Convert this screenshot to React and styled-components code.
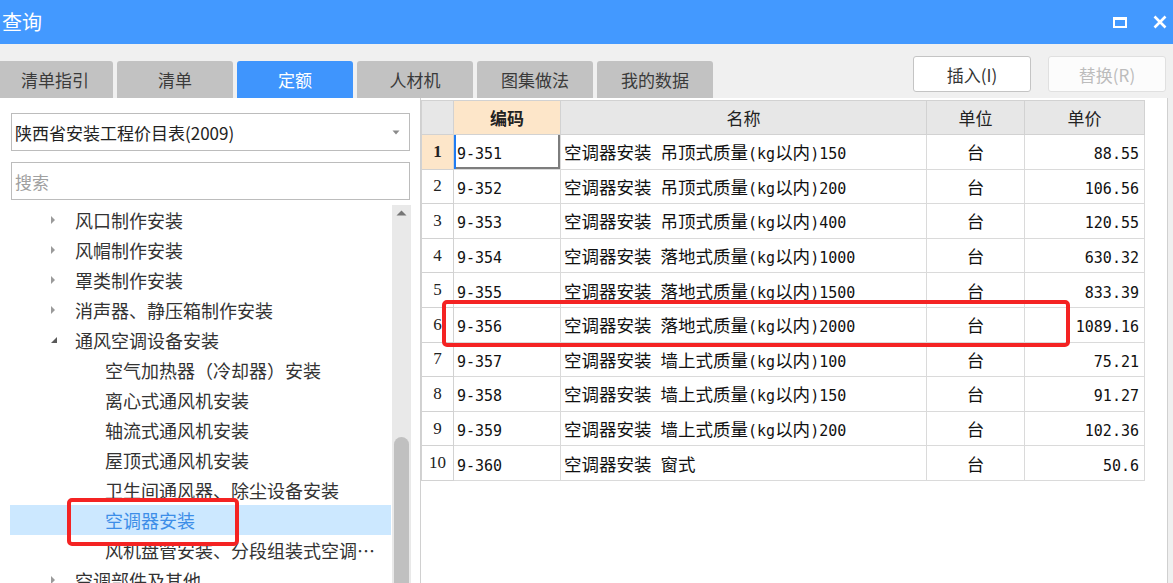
import React from 'react'
import styled, { createGlobalStyle, css } from 'styled-components'

const GlobalStyle = createGlobalStyle`
  html, body {
    margin: 0;
    padding: 0;
  }
  body {
    font-family: "Noto Sans CJK SC", "Noto Sans", sans-serif;
    background: #f0f0f0;
    color: #333;
  }
`

const Window = styled.div`
  position: relative;
  width: 1173px;
  height: 583px;
  overflow: hidden;
  display: flex;
  flex-direction: column;
  background: #f0f0f0;
`

const TitleBar = styled.div`
  flex: none;
  height: 44px;
  display: flex;
  align-items: center;
  padding: 0 6px 0 2px;
  background: #4399ff;
  color: #fff;
`

const Title = styled.div`
  flex: 1;
  font-size: 20px;
  line-height: 1;
`

const WinButtons = styled.div`
  display: flex;
  align-items: center;
  gap: 26px;
`

const Toolbar = styled.div`
  flex: none;
  height: 54px;
  display: flex;
  align-items: flex-start;
`

const Tabs = styled.div`
  display: flex;
  gap: 4px;
  margin: 17px 0 0 -3px;
`

const Tab = styled.div`
  width: 116px;
  height: 37px;
  display: flex;
  align-items: center;
  justify-content: center;
  border-radius: 3px 3px 0 0;
  background: #c2c2c2;
  color: #3a3a3a;
  font-size: 17px;
  ${p =>
    p.active &&
    css`
      background: #3f95fd;
      color: #fff;
    `};
`

const Buttons = styled.div`
  margin: 12px 7px 0 auto;
  display: flex;
  gap: 17px;
`

const Button = styled.div`
  width: 118px;
  height: 36px;
  box-sizing: border-box;
  display: flex;
  align-items: center;
  justify-content: center;
  border: 1px solid #c4c4c4;
  border-radius: 3px;
  background: #fff;
  color: #333;
  font-size: 17px;
  ${p =>
    p.disabled &&
    css`
      border-color: #e0e0e0;
      background: #fcfcfc;
      color: #bcbcbc;
    `};
`

const Body = styled.div`
  flex: 1;
  min-height: 0;
  display: flex;
  padding-right: 5px;
`

const LeftPanel = styled.div`
  width: 420px;
  flex: none;
  box-sizing: border-box;
  background: #fff;
  padding: 15px 9px 0 10px;
  display: flex;
  flex-direction: column;
  min-height: 0;
`

const Field = styled.div`
  width: 399px;
  height: 38px;
  box-sizing: border-box;
  margin-left: 1px;
  border: 1px solid #bcbcbc;
  display: flex;
  align-items: center;
  justify-content: space-between;
  padding: 0 9px 0 3px;
  font-size: 17px;
  color: ${p => (p.placeholder ? '#a0a0a0' : '#222')};
  & + & {
    margin-top: 11px;
  }
`

const Tree = styled.div`
  margin-top: 5px;
  flex: 1;
  min-height: 0;
  display: flex;
  gap: 1px;
`

const TreeList = styled.div`
  flex: 1;
  overflow: hidden;
`

const TreeRow = styled.div`
  height: 30px;
  display: flex;
  align-items: center;
  padding-left: ${p => (p.level === 2 ? 95 : 40)}px;
  padding-right: 5px;
  font-size: 18px;
  color: #333;
  white-space: nowrap;
  ${p =>
    p.selected &&
    css`
      background: #cce8ff;
      color: #3d8ee8;
    `};
`

const Toggle = styled.span`
  width: 25px;
  flex: none;
  display: flex;
  align-items: center;
`

const Label = styled.span`
  overflow: hidden;
  text-overflow: ellipsis;
  white-space: nowrap;
  max-width: 285px;
`

const Scrollbar = styled.div`
  width: 19px;
  flex: none;
  background: #e9e9e9;
  display: flex;
  flex-direction: column;
  align-items: center;
`

const ScrollArrow = styled.div`
  height: 16px;
  display: flex;
  align-items: center;
`

const Thumb = styled.div`
  width: 15px;
  flex: 1;
  margin-top: ${p => p.offset}px;
  border-radius: 8px 8px 0 0;
  background: #c0c0c0;
`

const RightPanel = styled.div`
  flex: 1;
  background: #fff;
  border-left: 1px solid #d0d0d0;
  border-right: 1px solid #d0d0d0;
  padding-top: 2px;
`

const Grid = styled.table`
  width: 723px;
  table-layout: fixed;
  border-collapse: collapse;
  font-family: "Noto Sans CJK SC", sans-serif;
`

const Th = styled.th`
  height: 34px;
  box-sizing: border-box;
  padding: 0;
  border: 1px solid #d2d2d2;
  background: ${p => (p.active ? '#fde6c9' : '#e7e7e7')};
  color: #222;
  font-size: 17px;
  font-weight: ${p => (p.active ? 700 : 400)};
  text-align: center;
`

const Td = styled.td`
  height: 34.6px;
  box-sizing: border-box;
  padding: 0 ${p => (p.align === 'right' ? 5 : 3)}px 0 3px;
  border: 1px solid #dadada;
  font-size: 17.5px;
  color: #111;
  white-space: nowrap;
  overflow: hidden;
  text-align: ${p => p.align || 'left'};
  ${p =>
    p.focused &&
    css`
      box-shadow: inset 2px 0 0 #1f7cf2, inset -2px -2px 0 #7d7d7d;
    `};
`

const RowNum = styled.td`
  height: 34.6px;
  box-sizing: border-box;
  padding: 0;
  border: 1px solid #d2d2d2;
  text-align: center;
  font-family: "Liberation Serif", serif;
  font-size: 17px;
  color: #222;
  ${p =>
    p.active &&
    css`
      background: #fde6c9;
      font-weight: 700;
    `};
`

const Latin = styled.span`
  font-family: "DejaVu Sans Mono", monospace;
  font-size: 15px;
`

const Marker = styled.div`
  position: absolute;
  box-sizing: border-box;
  border: 4px solid #f42323;
  border-radius: 5px;
  pointer-events: none;
`

const tabs = ['清单指引', '清单', '定额', '人材机', '图集做法', '我的数据']

const tree = [
  { label: '风口制作安装', level: 1, state: 'closed' },
  { label: '风帽制作安装', level: 1, state: 'closed' },
  { label: '罩类制作安装', level: 1, state: 'closed' },
  { label: '消声器、静压箱制作安装', level: 1, state: 'closed' },
  { label: '通风空调设备安装', level: 1, state: 'open' },
  { label: '空气加热器（冷却器）安装', level: 2 },
  { label: '离心式通风机安装', level: 2 },
  { label: '轴流式通风机安装', level: 2 },
  { label: '屋顶式通风机安装', level: 2 },
  { label: '卫生间通风器、除尘设备安装', level: 2 },
  { label: '空调器安装', level: 2, selected: true },
  { label: '风机盘管安装、分段组装式空调机组安装', level: 2 },
  { label: '空调部件及其他', level: 1, state: 'closed' }
]

const rows = [
  ['9-351', '空调器安装 吊顶式质量(kg以内)150', '台', '88.55'],
  ['9-352', '空调器安装 吊顶式质量(kg以内)200', '台', '106.56'],
  ['9-353', '空调器安装 吊顶式质量(kg以内)400', '台', '120.55'],
  ['9-354', '空调器安装 落地式质量(kg以内)1000', '台', '630.32'],
  ['9-355', '空调器安装 落地式质量(kg以内)1500', '台', '833.39'],
  ['9-356', '空调器安装 落地式质量(kg以内)2000', '台', '1089.16'],
  ['9-357', '空调器安装 墙上式质量(kg以内)100', '台', '75.21'],
  ['9-358', '空调器安装 墙上式质量(kg以内)150', '台', '91.27'],
  ['9-359', '空调器安装 墙上式质量(kg以内)200', '台', '102.36'],
  ['9-360', '空调器安装 窗式', '台', '50.6']
]

// 表格里的半角字符用等宽字体，宽度接近原来的宋体
const mixed = text =>
  text
    .split(/([\x20-\x7e]+)/)
    .filter(Boolean)
    .map((part, i) =>
      /^[\x20-\x7e]+$/.test(part) ? (
        <Latin key={i}>{part.replace(/ /g, '\u00a0')}</Latin>
      ) : (
        <span key={i}>{part}</span>
      )
    )

const TreeCaret = ({ state }) =>
  state === 'open' ? (
    <svg width="8" height="8" viewBox="0 0 8 8">
      <path d="M7 1 L7 7 L1 7 Z" fill="#5a5a5a" />
    </svg>
  ) : (
    <svg width="6" height="10" viewBox="0 0 6 10">
      <path d="M1 1 L5 5 L1 9 Z" fill="#9a9a9a" />
    </svg>
  )

export default function App() {
  return (
    <Window>
      <GlobalStyle />
      <TitleBar>
        <Title>查询</Title>
        <WinButtons>
          <svg width="14" height="11" viewBox="0 0 14 11">
            <rect x="1" y="1.5" width="12" height="8.5" fill="none" stroke="#fff" strokeWidth="2" />
            <rect x="0" y="0" width="14" height="3" fill="#fff" />
          </svg>
          <svg width="14" height="14" viewBox="0 0 14 14">
            <path d="M1.5 1.5 L12.5 12.5 M12.5 1.5 L1.5 12.5" stroke="#fff" strokeWidth="2.6" />
          </svg>
        </WinButtons>
      </TitleBar>

      <Toolbar>
        <Tabs>
          {tabs.map(t => (
            <Tab key={t} active={t === '定额'}>
              {t}
            </Tab>
          ))}
        </Tabs>
        <Buttons>
          <Button>插入(I)</Button>
          <Button disabled>替换(R)</Button>
        </Buttons>
      </Toolbar>

      <Body>
        <LeftPanel>
          <Field>
            <span>陕西省安装工程价目表(2009)</span>
            <svg width="8" height="5" viewBox="0 0 8 5">
              <path d="M0.5 0.5 L7.5 0.5 L4 4.5 Z" fill="#8a8a8a" />
            </svg>
          </Field>
          <Field placeholder>搜索</Field>
          <Tree>
            <TreeList>
              {tree.map(n => (
                <TreeRow key={n.label} level={n.level} selected={n.selected}>
                  {n.level === 1 && (
                    <Toggle>
                      <TreeCaret state={n.state} />
                    </Toggle>
                  )}
                  <Label>{n.label}</Label>
                </TreeRow>
              ))}
            </TreeList>
            <Scrollbar>
              <ScrollArrow>
                <svg width="11" height="6" viewBox="0 0 11 6">
                  <path d="M0.5 5.5 L5.5 0.5 L10.5 5.5 Z" fill="#767676" />
                </svg>
              </ScrollArrow>
              <Thumb offset={216} />
            </Scrollbar>
          </Tree>
        </LeftPanel>

        <RightPanel>
          <Grid>
            <colgroup>
              <col style={{ width: 32 }} />
              <col style={{ width: 107 }} />
              <col style={{ width: 366 }} />
              <col style={{ width: 98 }} />
              <col style={{ width: 120 }} />
            </colgroup>
            <thead>
              <tr>
                <Th />
                <Th active>编码</Th>
                <Th>名称</Th>
                <Th>单位</Th>
                <Th>单价</Th>
              </tr>
            </thead>
            <tbody>
              {rows.map((r, i) => (
                <tr key={r[0]}>
                  <RowNum active={i === 0}>{i + 1}</RowNum>
                  <Td focused={i === 0}>{mixed(r[0])}</Td>
                  <Td>{mixed(r[1])}</Td>
                  <Td align="center">{r[2]}</Td>
                  <Td align="right">{mixed(r[3])}</Td>
                </tr>
              ))}
            </tbody>
          </Grid>
        </RightPanel>
      </Body>

      <Marker style={{ left: 67, top: 498, width: 172, height: 48 }} />
      <Marker style={{ left: 442, top: 300, width: 628, height: 47 }} />
    </Window>
  )
}
